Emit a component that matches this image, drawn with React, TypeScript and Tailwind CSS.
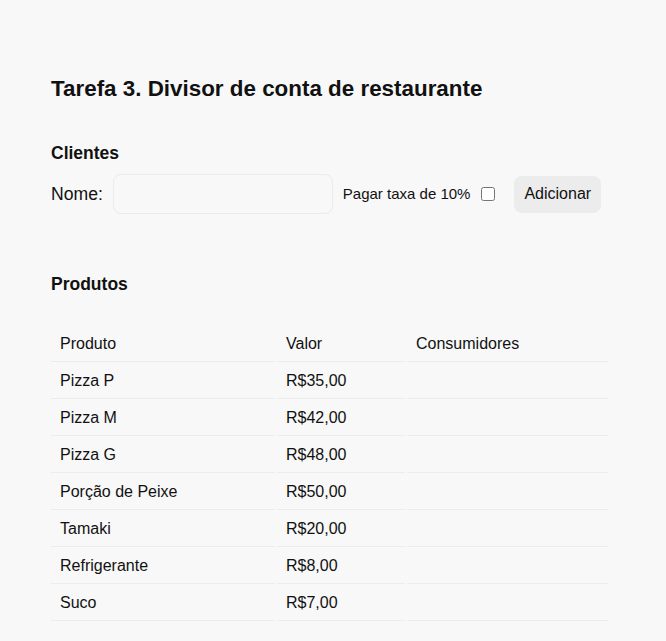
import React from "react";

const produtos = [
  { nome: "Pizza P", valor: "R$35,00" },
  { nome: "Pizza M", valor: "R$42,00" },
  { nome: "Pizza G", valor: "R$48,00" },
  { nome: "Porção de Peixe", valor: "R$50,00" },
  { nome: "Tamaki", valor: "R$20,00" },
  { nome: "Refrigerante", valor: "R$8,00" },
  { nome: "Suco", valor: "R$7,00" },
];

function Cell({ children, className = "" }: { children?: React.ReactNode; className?: string }) {
  return (
    <td className={`h-[35px] px-[9px] border-b border-[#ececec] align-middle ${className}`}>{children}</td>
  );
}

export default function App() {
  return (
    <div className="min-h-[641px] bg-[#f8f8f8] text-[#111] pl-[51px] pt-[76px] font-['Liberation_Sans',Arial,sans-serif]">
      <h1 className="text-[22.4px] leading-[26px] font-bold">Tarefa 3. Divisor de conta de restaurante</h1>

      <h2 className="mt-[41px] text-[17.5px] leading-[20px] font-bold">Clientes</h2>
      <div className="mt-[11px] flex items-center h-10">
        <label className="text-[17.6px]">Nome:</label>
        <input
          type="text"
          className="ml-[10px] w-[220px] h-10 rounded-lg border border-[#ebebeb] bg-[#f8f8f8] outline-none"
        />
        <span className="ml-[10px] text-[15px]">Pagar taxa de 10%</span>
        <input type="checkbox" className="ml-[11px] w-[14px] h-[14px]" />
        <button className="ml-[19px] h-[37px] px-[10px] rounded-lg bg-[#ececec] text-[16px]">Adicionar</button>
      </div>

      <h2 className="mt-[60px] text-[17.5px] leading-[20px] font-bold">Produtos</h2>
      <table className="mt-[31px] -ml-[2px] border-separate border-spacing-[2px] text-[16px]">
        <thead>
          <tr className="text-left">
            <th className="h-[35px] w-[224px] px-[9px] border-b border-[#ececec] font-normal text-left">Produto</th>
            <th className="h-[35px] w-[128px] px-[9px] border-b border-[#ececec] font-normal text-left">Valor</th>
            <th className="h-[35px] w-[201px] px-[9px] border-b border-[#ececec] font-normal text-left">Consumidores</th>
          </tr>
        </thead>
        <tbody>
          {produtos.map((p) => (
            <tr key={p.nome}>
              <Cell>{p.nome}</Cell>
              <Cell>{p.valor}</Cell>
              <Cell />
            </tr>
          ))}
        </tbody>
      </table>
    </div>
  );
}
